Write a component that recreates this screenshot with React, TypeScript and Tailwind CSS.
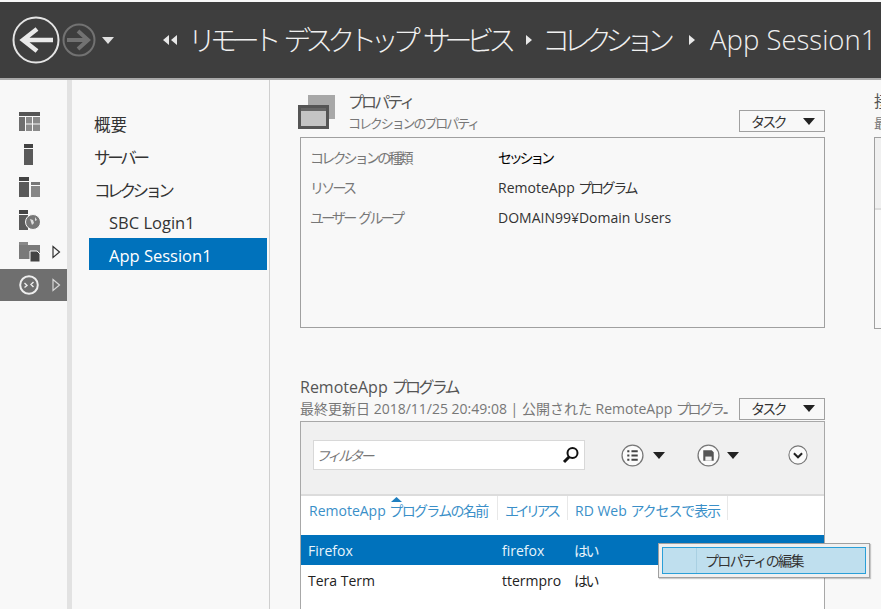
import type { ReactNode } from "react";

const font = { fontFamily: '"Open Sans", "Noto Sans CJK JP", sans-serif' };

// narrow kana, the reference uses a condensed UI font
const K = ({ children, t = "tracking-[-0.17em]" }: { children: ReactNode; t?: string }) => (
  <span className={t}>{children}</span>
);

const Tri = ({ className = "fill-[#222]", w = 12, h = 7 }: { className?: string; w?: number; h?: number }) => (
  <svg width={w} height={h} viewBox="0 0 12 7" className={`shrink-0 ${className}`}>
    <path d="M0 0h12L6 7z" />
  </svg>
);

const RailOutline = ({ light }: { light?: boolean }) => (
  <svg width="9" height="14" viewBox="0 0 9 14" fill="none" stroke={light ? "#d8d8d8" : "#333"} strokeWidth="1.2">
    <path d="M1 1.5l6.5 5.5L1 12.5z" />
  </svg>
);

const RailIcon = ({ i }: { i: number }) => {
  if (i === 0)
    return (
      <svg width="21" height="20" viewBox="0 0 21 20">
        <rect x="0" y="0" width="21" height="4" fill="#555" />
        <rect x="0" y="5" width="6" height="14" fill="#6e6e6e" />
        <rect x="7" y="5" width="6" height="6.5" fill="#8a8a8a" />
        <rect x="14" y="5" width="7" height="6.5" fill="#8a8a8a" />
        <rect x="7" y="12.5" width="6" height="6.5" fill="#8a8a8a" />
        <rect x="14" y="12.5" width="7" height="6.5" fill="#8a8a8a" />
      </svg>
    );
  if (i === 1)
    return (
      <svg width="21" height="21" viewBox="0 0 21 21">
        <rect x="5" y="0" width="9" height="4" fill="#444" />
        <rect x="5" y="5" width="9" height="16" fill="#5a5a5a" />
      </svg>
    );
  if (i === 2)
    return (
      <svg width="21" height="21" viewBox="0 0 21 21">
        <rect x="0" y="0" width="10" height="4" fill="#444" />
        <rect x="0" y="5" width="10" height="15" fill="#5a5a5a" />
        <rect x="12" y="5" width="9" height="3" fill="#777" />
        <rect x="12" y="9" width="9" height="11" fill="#868686" />
      </svg>
    );
  if (i === 3)
    return (
      <svg width="21" height="20" viewBox="0 0 21 20">
        <rect x="0" y="0" width="9" height="4" fill="#444" />
        <rect x="0" y="5" width="9" height="15" fill="#5a5a5a" />
        <circle cx="14" cy="12" r="7.5" fill="#777" stroke="#f8f8f8" />
        <path d="M11 9l3 1 1 3-2 2-1-3zM16 7l2 3-2 1z" fill="#ddd" />
      </svg>
    );
  return (
    <svg width="21" height="20" viewBox="0 0 21 20">
      <rect x="0" y="0" width="9" height="3" fill="#888" />
      <rect x="0" y="3" width="21" height="14" fill="#7a7a7a" />
      <path d="M11 9h7l3 3v8H11z" fill="#444" stroke="#f8f8f8" />
    </svg>
  );
};

const Circle = ({ size, children }: { size: number; children: ReactNode }) => (
  <svg width={size} height={size} viewBox="0 0 22 22" className="shrink-0">
    <circle cx="11" cy="11" r="10" fill="#fbfbfb" stroke="#777" strokeWidth="1.2" />
    {children}
  </svg>
);

const TaskButton = () => (
  <div className="flex h-[22px] w-[86px] shrink-0 items-center justify-between border border-[#a0a0a0] bg-[#f8f8f8] pl-[11px] pr-[9px] text-[14px] text-[#333]">
    <K t="tracking-[-0.2em]">タスク</K>
    <Tri />
  </div>
);

const rail = [0, 1, 2, 3, 4];
const nav = [
  { label: "概要", pl: "pl-[5px]", t: "" },
  { label: "サーバー", pl: "pl-[5px]", t: "tracking-[-0.2em]" },
  { label: "コレクション", pl: "pl-[5px]", t: "tracking-[-0.22em]" },
  { label: "SBC Login1", pl: "pl-[20px]", t: "" },
];

const props = [
  { k: "コレクションの種類", v: "セッション", dark: true },
  { k: "リソース", v: "RemoteApp プログラム" },
  { k: "ユーザー グループ", v: "DOMAIN99¥Domain Users" },
];

export default function App() {
  return (
    <div className="relative h-[609px] w-[881px] overflow-hidden bg-[#f8f8f8] pt-[2px]" style={font}>
      <header className="flex h-[78px] items-center border-b-2 border-[#a8a8a8] bg-[#3e3e3e] pl-[12px] text-white">
        <svg width="48" height="48" viewBox="0 0 48 48" fill="none" className="shrink-0">
          <circle cx="24" cy="24" r="22.5" stroke="#e4e4e4" strokeWidth="2" />
          <path d="M41 24H14M25 13L11 24l14 11" stroke="#eaeaea" strokeWidth="4.5" />
        </svg>
        <svg width="34" height="34" viewBox="0 0 34 34" fill="none" className="ml-[2px] shrink-0">
          <circle cx="17" cy="17" r="15.5" stroke="#727272" strokeWidth="2" />
          <path d="M5 17h20M16 8l10 9-10 9" stroke="#727272" strokeWidth="4" />
        </svg>
        <Tri className="ml-[6px] fill-[#e0e0e0]" />
        <svg width="16" height="10" viewBox="0 0 16 10" className="ml-[48px] shrink-0 fill-[#e8e8e8]">
          <path d="M7 0v10L1 5zM15 0v10L9 5z" />
        </svg>
        <span className="ml-[10px] whitespace-nowrap text-[28px] font-light leading-none text-[#f0f0f0] [word-spacing:7px]">
          <K t="tracking-[-0.22em]">リモート デスクトップ サービス</K>
        </span>
        <svg width="7" height="10" viewBox="0 0 7 10" className="ml-[16px] shrink-0 fill-[#e8e8e8]">
          <path d="M0 0v10l6-5z" />
        </svg>
        <span className="ml-[9px] whitespace-nowrap text-[28px] font-light leading-none text-[#f0f0f0]">
          <K t="tracking-[-0.25em]">コレクション</K>
        </span>
        <svg width="7" height="10" viewBox="0 0 7 10" className="ml-[21px] shrink-0 fill-[#e8e8e8]">
          <path d="M0 0v10l6-5z" />
        </svg>
        <span className="ml-[14px] whitespace-nowrap text-[27.500px] font-light leading-none text-[#f0f0f0]">App Session1</span>
      </header>

      <div className="flex h-[529px]">
        <aside className="w-[72px] shrink-0 border-r-[5px] border-[#e2e2e2] pt-[26px]">
          {rail.map((i) => (
            <div key={i} className="relative flex h-[32.5px] items-center pl-[19px]">
              <RailIcon i={i} />
              {i === 4 && (
                <span className="ml-[12px]">
                  <RailOutline />
                </span>
              )}
            </div>
          ))}
          <div className="flex h-[32px] items-center bg-[#6f6f6f] pl-[19px]">
            <svg width="20" height="20" viewBox="0 0 20 20" fill="none" stroke="#eee" strokeWidth="2">
              <circle cx="10" cy="10" r="8.8" />
              <path d="M5.5 8l2.5 2.5-2.5 2M14.5 7l-2.500 2.500 2.500 2.500" strokeWidth="1.4" />
            </svg>
            <span className="ml-[13px]">
              <RailOutline light />
            </span>
          </div>
        </aside>

        <nav className="w-[198px] shrink-0 border-r border-[#cfcfcf] pl-[17px] pr-[2px] pt-[29px] text-[16.500px] text-[#333]">
          {nav.map((n) => (
            <div key={n.label} className={`flex h-[32.750px] items-center ${n.pl} whitespace-nowrap`}>
              <span className={n.t}>{n.label}</span>
            </div>
          ))}
          <div className="mt-[-2px] flex h-[32px] items-center bg-[#0072bc] pl-[20px] pt-[4px] text-white">App Session1</div>
        </nav>

        <main className="flex min-w-0 flex-1">
          <div className="ml-[30px] w-[525px] shrink-0">
            <section className="h-[280px] pt-[12px]">
              <div className="flex h-[43px]">
                <svg width="38" height="36" viewBox="0 0 38 36" className="ml-[-2px] mt-[3px] shrink-0">
                  <rect x="10" y="0" width="27" height="24" fill="#a8a8a8" />
                  <rect x="1.500" y="11.500" width="28" height="21" fill="#c4c4c4" stroke="#555" strokeWidth="3" />
                  <rect x="3" y="13" width="25" height="3" fill="#666" />
                </svg>
                <div className="ml-[12px] flex-1">
                  <div className="text-[16px] leading-[20px] text-[#555]"><K t="tracking-[-0.18em]">プロパティ</K></div>
                  <div className="text-[13px] leading-[23px] text-[#777]"><K t="tracking-[-0.16em]">コレクションのプロパティ</K></div>
                </div>
                <div className="mt-[18px]"><TaskButton /></div>
              </div>
              <div className="mt-[2px] h-[191px] border border-[#a0a0a0] pl-[9px] pt-[4px] text-[14px]">
                {props.map((p) => (
                  <div key={p.k} className="flex h-[30px] items-center">
                    <span className="w-[188px] shrink-0 text-[#777] [word-spacing:3px]"><K t="tracking-[-0.2em]">{p.k}</K></span>
                    <span className={p.dark ? "text-black" : "text-[#333]"}>
                      {p.v.startsWith("RemoteApp") ? (
                        <>RemoteApp <K>プログラム</K></>
                      ) : p.dark ? (
                        <K t="tracking-[-0.23em]">{p.v}</K>
                      ) : (
                        p.v
                      )}
                    </span>
                  </div>
                ))}
              </div>
            </section>

            <section className="mt-[16px]">
              <div className="text-[16px] leading-[22px] text-[#555]">RemoteApp <K>プログラム</K></div>
              <div className="flex h-[21px] items-center justify-between">
                <span className="whitespace-nowrap text-[14px] text-[#777]">
                  <K t="tracking-[0em]">最終更新日 2018/11/25 20:49:08 | 公開された RemoteApp <K>プログラ...</K></K>
                </span>
                <TaskButton />
              </div>
              <div className="mt-[2px] h-[200px] border border-b-0 border-[#a8a8a8] bg-white">
                <div className="flex h-[74px] items-start border-b-2 border-[#dcdcdc] bg-[#f0f0f0] pl-[12px] pt-[18px]">
                  <div className="flex h-[30px] w-[272px] shrink-0 items-center justify-between border border-[#d8d8d8] bg-white pl-[2px] pr-[4px] text-[14px] italic text-[#777]">
                    <K t="tracking-[-0.2em]">フィルター</K>
                    <svg width="18" height="18" viewBox="0 0 18 18" fill="none" stroke="#111">
                      <circle cx="10.500" cy="7" r="5" strokeWidth="2" />
                      <path d="M7 11l-5 5" strokeWidth="3" />
                    </svg>
                  </div>
                  <div className="ml-[36px] mt-[3.500px] flex items-center">
                    <Circle size={23}>
                      <path d="M6 7h2M10 7h6M6 11h2M10 11h6M6 15h2M10 15h6" stroke="#444" strokeWidth="2" />
                    </Circle>
                    <Tri className="ml-[9px] fill-[#222]" />
                  </div>
                  <div className="ml-[32px] mt-[3.500px] flex items-center">
                    <Circle size={23}>
                      <path d="M6 6h8l2 2v8H6z" fill="#555" />
                      <path d="M8 12h6v4H8z" fill="#eee" />
                    </Circle>
                    <Tri className="ml-[7px] fill-[#222]" />
                  </div>
                  <div className="ml-[49px] mt-[5px]">
                    <Circle size={20}>
                      <path d="M6.500 9l4.500 4.500L15.500 9" fill="none" stroke="#222" strokeWidth="2.200" />
                    </Circle>
                  </div>
                </div>
                <div className="relative flex h-[39px] items-start text-[14px] text-[#3a8fc8]">
                  <div className="relative flex h-[24px] w-[197px] shrink-0 items-center border-r border-[#e8e8e8] pl-[8px] pt-[5px]">
                    <span className="whitespace-nowrap">RemoteApp <K t="tracking-[-0.12em]">プログラムの名前</K></span>
                    <svg width="11" height="5" viewBox="0 0 11 5" className="absolute left-[90px] top-[1px] fill-[#1f7fc0]">
                      <path d="M0 5L5.500 0 11 5z" />
                    </svg>
                  </div>
                  <div className="flex h-[24px] w-[70px] shrink-0 items-center border-r border-[#e8e8e8] pl-[7px] pt-[5px]"><K t="tracking-[-0.25em]">エイリアス</K></div>
                  <div className="flex h-[24px] w-[160px] shrink-0 items-center whitespace-pre border-r border-[#e8e8e8] pl-[7px] pt-[5px]">
                    <span>RD Web </span><K t="tracking-[-0.08em]">アクセスで表示</K>
                  </div>
                </div>
                <div className="flex h-[30px] items-center bg-[#0072bc] pl-[7px] text-[14px] text-[#e8f4fb]">
                  <span className="w-[194px] shrink-0">Firefox</span>
                  <span className="w-[72px] shrink-0">firefox</span>
                  <K>はい</K>
                </div>
                <div className="flex h-[30px] items-center pl-[7px] text-[14px] text-[#222]">
                  <span className="w-[194px] shrink-0">Tera Term</span>
                  <span className="w-[72px] shrink-0">ttermpro</span>
                  <K>はい</K>
                </div>
              </div>
            </section>
          </div>

          <div className="ml-[49px] w-[200px] shrink-0 pt-[10px]">
            <div className="text-[16px] leading-[22px] text-[#555]">接続</div>
            <div className="text-[13px] leading-[22px] text-[#777]">最終更新日</div>
            <div className="mt-[3px] h-[192px] border border-[#a0a0a0]">
              <div className="h-[72px] border-b-2 border-[#dcdcdc] bg-[#f0f0f0]" />
            </div>
          </div>
        </main>
      </div>

      <div className="absolute left-[658px] top-[543px] h-[35px] w-[212px] border border-[#a0a0a0] bg-[#f0f0f0] p-[3px] shadow-[1px_1px_1px_rgba(0,0,0,0.2)]">
        <div className="flex h-full items-center border border-[#2a9fd8] bg-[#bfdfee] text-[14px] text-[#333]">
          <div className="h-full w-[34px] border-r border-[#a9d0e2]" />
          <span className="ml-[8px]"><K t="tracking-[-0.12em]">プロパティの編集</K></span>
        </div>
      </div>
    </div>
  );
}
